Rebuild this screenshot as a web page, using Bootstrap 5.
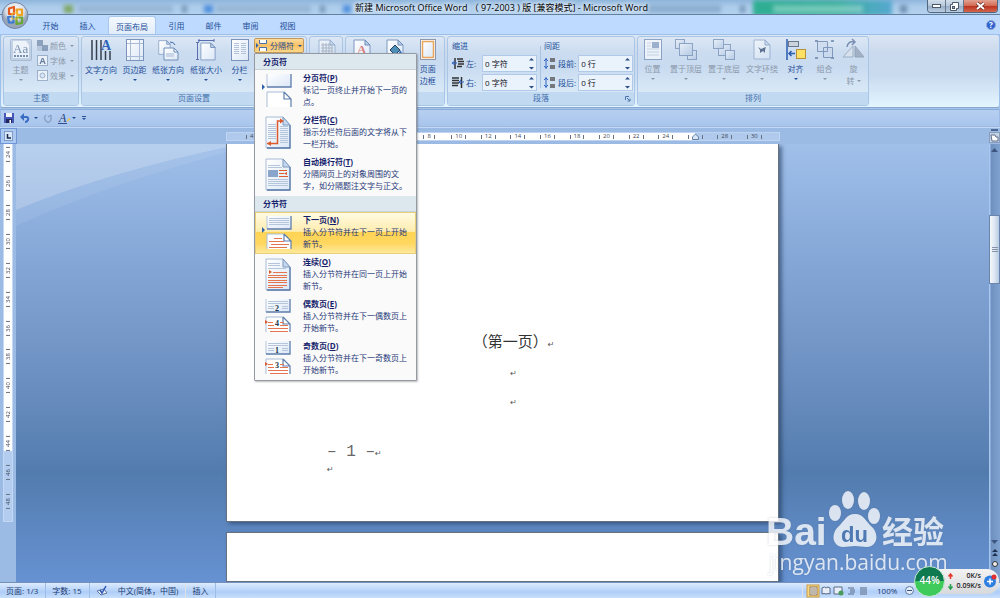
<!DOCTYPE html>
<html lang="zh-CN">
<head>
<meta charset="utf-8">
<meta name="viewport" content="width=device-width, initial-scale=1">
<title>新建 Microsoft Office Word （ 97-2003 ) 版 [兼容模式] - Microsoft Word</title>
<link href="https://cdn.jsdelivr.net/npm/bootstrap@5.3.0/dist/css/bootstrap.min.css" rel="stylesheet">
<style>
  :root { --ink: #224e98; --dim: #8b98aa; --line: #a3bfe2; }
  body { font-family: "Open Sans", "Noto Sans CJK SC", sans-serif; font-size: 8px; line-height: 12px; color: var(--ink); background: #a5c3ec; }
  button, input { font: inherit; color: inherit; }
  button { border: 0; background: none; padding: 0; white-space: nowrap; }
  svg { display: block; flex: none; overflow: visible; }
  a { color: inherit; text-decoration: none; }

  .titlebar { height: 15px; background: linear-gradient(#8fb6dc, #abcbea 45%, #b3d2f0); border-bottom: 1px solid #64809f; overflow: hidden; }
  .titlebar h1 { font-size: 9px; line-height: 15px; font-weight: 400; color: #000; text-shadow: 0 0 4px #fff, 0 0 6px #fff; padding-left: 3px; }
  .glass i { position: absolute; filter: blur(2px); top: 5px; height: 8px; }
  .winctl { top: 0; right: 2px; height: 13px; width: 71px; border: 1px solid #52677f; border-top: 0; border-radius: 0 0 4px 4px; overflow: hidden; }
  .winctl button { flex: 1; background: linear-gradient(#d3dfea, #b4c6d9 50%, #98adc6 51%, #b9cde2); border-right: 1px solid #65788e; }
  .winctl button:last-child { flex: 2; border: 0; background: linear-gradient(#e3a292, #d26a52 48%, #bb3320 52%, #d4674c); }
  .orb { left: 1px; top: 2px; z-index: 5; }

  .tabs { height: 19px; background: #bedaff; padding-left: 32px; }
  .tabs a { width: 37px; text-align: center; line-height: 21px; }
  .tabs a.on { width: 48px; margin: 1px 2px 0; line-height: 19px; background: linear-gradient(#f4f9ff, #e2edfa); border: 1px solid #a9c8ee; border-bottom: 0; border-radius: 3px 3px 0 0; }

  .ribbon { height: 74px; padding: 1px 2px; gap: 2px; background: linear-gradient(#dbe6f4, #cad9ed 18px, #c8daef 40px, #e3f5ff); border: 1px solid #9dc0ea; border-bottom-color: #88a8d0; border-radius: 3px; }
  .rgroup { border: 1px solid #a9c6e6; border-radius: 3px; background: linear-gradient(#dce7f5, #cbdcf0 16px, #c9dbf0 30px, #d9e9f7 56px); height: 70px; }
  .rgroup > footer { height: 13px; line-height: 12px; text-align: center; background: #c1d9f1; color: #4470ad; position: relative; }
  .rbody { flex: 1; padding-top: 1px; min-height: 0; }
  .big { width: 29px; display: flex; flex-direction: column; align-items: center; white-space: nowrap; padding-top: 1px; }
  .big svg { margin-bottom: 3px; }
  .wide { width: 38px; }
  .tri::after { content: ""; border: 2px solid transparent; border-top-color: currentColor; border-bottom: 0; display: block; }
  .big.tri::after { margin-top: 3px; }
  .off { color: var(--dim); }
  .off svg { opacity: .6; }
  .small-btn { display: flex; align-items: center; gap: 2px; height: 15px; }
  .breaks-btn { width: 50px; height: 15px; display: flex; align-items: center; gap: 2px; padding-left: 1px; border: 1px solid #c2975a; border-radius: 2px; background: linear-gradient(#fbdc9d, #f8c064 50%, #fcd98a); position: relative; z-index: 21; }

  .spin { width: 55px; height: 17px; border: 1px solid #b0c9e8; background: #eaf2fb; color: #112; padding-right: 2px; }
  .spin input { border: 0; outline: 0; background: none; padding: 0 2px; min-width: 0; flex: 1; }
  .prow { height: 19px; gap: 2px; }
  .vline { width: 1px; background: #a8c2e2; margin: 8px 3px 4px; }

  .breaks-menu { position: absolute; left: 0; top: 15px; width: 163px; z-index: 20; background: #fafafa; border: 1px solid #959aa2; border-radius: 1px; box-shadow: 1px 1px 2px #0004; color: #1f3878; }
  .breaks-menu h2 { font-size: 8px; line-height: 16px; height: 16px; font-weight: 700; margin: 0; padding-left: 8px; background: #dde7ee; border-bottom: 1px solid #c9d2da; color: #15226b; }
  .breaks-menu button { display: flex; width: 100%; height: 42px; text-align: left; padding: 1px 0 0 7px; gap: 11px; }
  .breaks-menu b { display: block; line-height: 13px; color: #15226b; }
  .breaks-menu .hot { border: 1px solid #e8cf7b; padding: 0 0 0 6px; background: linear-gradient(#fffbe2, #ffedaf 46%, #ffd455 48%, #ffd75f 75%, #ffe99c); }

  .qat { height: 18px; margin-top: 1px; background: linear-gradient(#b6cff1, #a9c5ec); border: 1px solid #9bbbe5; border-top-color: #8aacd9; padding-left: 3px; gap: 6px; }
  .rulerbar { height: 17px; background: #9bbbe4; border-top: 1px solid #c2d8f5; }
  .corner { width: 17px; background: #abc8f0; border: 1px solid #6e96d8; }
  .hruler { width: 100%; max-width: 554px; height: 9px; margin: 4px 0 3px; border: 1px solid #bed4f0; padding: 0 10px; background: linear-gradient(90deg, #b0caee 83px, #fff 83px 468px, #b0caee 468px); color: #3f4855; font-size: 6px; line-height: 7px; }
  .hruler span { flex: 1; text-align: center; position: relative; }
  .tick { display: flex; align-items: center; justify-content: center; gap: 3px; }
  .tick::before, .tick::after { content: ""; width: 1px; height: 4px; background: #68717e; }

  .work { flex: 1; min-height: 0; }
  .vside { width: 16px; background: #9bbbe4; overflow: hidden; }
  .vruler { width: 10px; margin-left: 3px; height: 382px; background: linear-gradient(#fff 311px, #b3cdf1 311px); border: 1px solid #c4d8f3; border-top: 0; color: #3f4855; font-size: 6px; line-height: 8px; }
  .vruler ol { list-style: none; height: 376px; margin: -4px 0 0; padding: 0; }
  .vruler li { flex: 1; writing-mode: vertical-rl; transform: rotate(180deg); }
  .vruler .tick::before, .vruler .tick::after { width: 4px; height: 1px; }
  .canvas { flex: 1; overflow: hidden; background: linear-gradient(#a0c0ea, #86a8d8 25%, #6a8ebf 55%, #537cae 75%, #6692d2); }
  .sheet { width: 100%; max-width: 553px; background: #fff; border: 1px solid #66707f; box-shadow: 3px 2px 4px #233a5a99; position: relative; color: #333; }
  .sheet.first { height: 378px; border-top: 0; margin-bottom: 10px; padding: 184px 100px 0; }
  .doc-line { height: 29px; line-height: 29px; text-align: center; font-family: "Liberation Serif", "Noto Sans CJK SC", serif; font-size: 15px; padding-left: 22px; }
  .pm { font-family: "DejaVu Sans", sans-serif; font-size: 8px; color: #555; }
  .pagenum { font-family: "Liberation Mono", monospace; font-size: 16px; line-height: 24px; color: #666; white-space: pre; margin-top: 25px; }
  .vscroll { width: 11px; background: linear-gradient(90deg, #a9c6ef 1px, #6d90c0 2px, #7fa2d0); }
  .thumb { height: 69px; background: linear-gradient(90deg, #f5f8fc, #dce7f3 50%, #b5cbe2); border: 1px solid #6a84ad; }

  .statusbar { height: 16px; background: linear-gradient(#dceafd, #bfd8fa 40%, #aecdf7 60%, #c9e0fc); border-top: 1px solid #7393be; color: #1a3a72; line-height: 15px; }
  .statusbar > * { border-right: 1px solid #9dbce6; padding: 0 7px 0 6px; white-space: nowrap; }
  .mark-brand { right: 52px; bottom: 21px; z-index: 3; filter: drop-shadow(0 0 1px #5b6d8866); }
  .meter { right: 0; bottom: 1px; z-index: 6; width: 86px; height: 31px; }
  .meter-pill { position: absolute; inset: 3px 1px 3px 12px; padding: 2px 18px 0 0; background: linear-gradient(#f3f3f3, #d8d9dc); border-radius: 12px; color: #222; font-size: 7px; font-weight: 600; line-height: 10px; text-align: right; }
</style>
</head>
<body class="vh-100 d-flex flex-column overflow-hidden position-relative">

<!-- shared icon parts -->
<svg width="0" height="0" class="position-absolute" aria-hidden="true">
  <defs>
    <linearGradient id="pg" x2="1" y2="1"><stop offset="0" stop-color="#fff"/><stop offset="1" stop-color="#dbe7f7"/></linearGradient>
    <linearGradient id="blue" y2="1" x2="1"><stop offset="0" stop-color="#f4f8fd"/><stop offset="1" stop-color="#a9c0de"/></linearGradient>
    <symbol id="sheetTall" viewBox="0 0 26 33"><path d="M1 1h17l7 8v23H1z" fill="url(#pg)" stroke="#a9bcd6"/><path d="M25 9v23H2" fill="none" stroke="#5578a8" stroke-width="1.3"/><path d="M18 1v8h7z" fill="#c5d8ee" stroke="#7d98bf"/></symbol>
    <symbol id="sheetTop" viewBox="0 0 26 14"><path d="M1 0v13h24V0z" fill="url(#pg)"/><path d="M1 0v13" stroke="#b5c5dc"/><path d="M1 13h24V0" fill="none" stroke="#5d7dac" stroke-width="1.3"/></symbol>
    <symbol id="sheetBot" viewBox="0 0 26 16"><path d="M1 16V1h17l7 7v8z" fill="#fff"/><path d="M1 16V1h17" fill="none" stroke="#a9bcd6"/><path d="M18 1l7 7v8M18 1v7h7" fill="none" stroke="#5d7dac" stroke-width="1.2"/></symbol>
    <symbol id="doc" viewBox="0 0 18 21"><path d="M1 1h11l5 5v14H1z" fill="url(#pg)" stroke="#7d98bf"/><path d="M12 1v5h5z" fill="#bcd0ea" stroke="#6f8db8"/></symbol>
  </defs>
</svg>

<header class="titlebar position-relative flex-shrink-0">
  <div class="glass" aria-hidden="true">
    <i style="left:64px;width:9px;background:#7ea765"></i><i style="left:78px;width:95px;background:#7797b966"></i><i style="left:182px;width:5px;background:#7797b9"></i>
    <i style="left:204px;width:9px;background:#4f8fdd"></i><i style="left:216px;width:95px;background:#7797b966"></i><i style="left:320px;width:5px;background:#7797b9"></i>
    <i style="left:343px;width:8px;background:#4f8fdd"></i><i style="left:645px;width:76px;background:#6f93b888"></i><i style="left:740px;width:5px;background:#7797b9"></i>
    <i style="left:753px;width:139px;top:0;height:16px;background:linear-gradient(90deg,#2fae92,#38ad9c 60%,#57a8d0)"></i><i style="left:773px;width:90px;background:#a8e0d488"></i><i style="left:900px;width:7px;background:#6f8fb3"></i>
  </div>
  <h1 class="position-relative text-center mb-0">新建 Microsoft Office Word （ 97-2003 ) 版 [兼容模式] - Microsoft Word</h1>
  <div class="winctl position-absolute d-flex">
    <button aria-label="最小化"><svg class="mx-auto" width="9" height="4"><rect x=".5" y=".5" width="8" height="3" fill="#fff" stroke="#4b596b"/></svg></button>
    <button aria-label="还原"><svg class="mx-auto" width="9" height="9"><path d="M2.500 .5h6v6h-2v2h-6v-6h2z" fill="#fff" stroke="#4b596b"/><rect x="2.500" y="4.500" width="2" height="2" fill="#9fb2c8" stroke="#4b596b"/></svg></button>
    <button aria-label="关闭"><svg class="mx-auto" width="9" height="8"><path d="M1 1l7 6M8 1L1 7" stroke="#6a2a22" stroke-width="3.500"/><path d="M1 1l7 6M8 1L1 7" stroke="#fff" stroke-width="2"/></svg></button>
  </div>
</header>

<button class="orb position-absolute" aria-label="Office 按钮">
  <svg width="28" height="28" viewBox="0 0 28 28"><defs><radialGradient id="orb" cy=".3"><stop offset="0" stop-color="#fff"/><stop offset=".7" stop-color="#d9e0ea"/><stop offset="1" stop-color="#98a5b8"/></radialGradient></defs>
    <circle cx="14" cy="13.500" r="13" fill="url(#orb)" stroke="#7286a2"/>
    <g fill="none" stroke-width="2.200" stroke-linejoin="round"><path d="M13 12H8V6.500l5-1.500z" stroke="#e35b1f"/><path d="M15.500 7.500H21V13h-4.500z" stroke="#f0a01f"/><path d="M12.500 14.500v6H8L7 15z" stroke="#3b79cf"/><path d="M15.500 15.500H21V21l-5.500 1z" stroke="#69a832"/></g><path d="M11 11h6v6h-6z" fill="none" stroke="#f5c53a"/></svg>
</button>

<nav class="tabs d-flex flex-shrink-0" aria-label="功能区">
  <a href="#">开始</a><a href="#">插入</a><a href="#" class="on" aria-current="page">页面布局</a><a href="#">引用</a><a href="#">邮件</a><a href="#">审阅</a><a href="#">视图</a>
  <button class="ms-auto me-1" aria-label="帮助"><svg width="10" height="10"><circle cx="5" cy="5" r="4.500" fill="#2f62d0" stroke="#8fa8d4"/><text x="5" y="8" font-size="8" font-weight="700" fill="#fff" text-anchor="middle">?</text></svg></button>
</nav>

<section class="ribbon d-flex flex-shrink-0">
  <!-- themes -->
  <div class="rgroup d-flex flex-column flex-shrink-0" style="width:76px">
    <div class="rbody d-flex off">
      <button class="big tri" style="width:33px"><svg width="22" height="22"><rect x=".5" y=".5" width="21" height="21" rx="1" fill="#b9c9de" stroke="#8fa5c2"/><path d="M3 2h13l3 4v13H3z" fill="#fff"/><text x="3" y="14" font-family="Liberation Serif" font-size="13" fill="#3d5a86">Aa</text><path d="M4 17h15" stroke="#3d5a86" stroke-dasharray="2 1" stroke-width="2"/></svg>主题</button>
      <div>
        <button class="small-btn tri"><svg width="11" height="11"><path d="M0 0h11v11H0z" fill="#5d7699"/><path d="M6 0h5v5H6z" fill="#dbe4ef"/><path d="M0 6h5v5H0z" fill="#a9bad0"/></svg>颜色&nbsp;</button>
        <button class="small-btn tri"><svg width="11" height="11"><rect x=".5" y=".5" width="10" height="10" fill="#fff" stroke="#7d92b0"/><text x="5.500" y="9" font-size="9" font-weight="700" text-anchor="middle" fill="#2d466e">A</text></svg>字体&nbsp;</button>
        <button class="small-btn tri"><svg width="11" height="11"><rect x=".5" y=".5" width="10" height="10" fill="#fff" stroke="#7d92b0"/><circle cx="5.500" cy="5.500" r="2.500" fill="#dfe8f4" stroke="#7d92b0"/></svg>效果&nbsp;</button>
      </div>
    </div>
    <footer>主题</footer>
  </div>

  <!-- page setup -->
  <div class="rgroup d-flex flex-column flex-shrink-0" style="width:226px">
    <div class="rbody d-flex">
      <button class="big wide tri"><svg width="22" height="22"><path d="M2 1v20M6.500 1v20M11 1v20M15.500 12v9M20 12v9" stroke="#37404d" stroke-width="1.500"/><text x="11" y="11" font-family="Liberation Serif" font-weight="700" font-size="14" fill="#2e65b8">A</text></svg>文字方向</button>
      <button class="big tri"><svg width="18" height="22"><rect x=".5" y=".5" width="17" height="21" fill="url(#pg)" stroke="#7a94bb"/><path d="M4.500 1v20M13.500 1v20M1 4.500h16M1 17.500h16" stroke="#a9bbd5"/></svg>页边距</button>
      <button class="big wide tri"><svg width="22" height="22"><use href="#doc" x="1" y="0" width="13" height="17"/><path d="M7 9h10l4 4v8H7z" fill="url(#pg)" stroke="#6f8db8"/><path d="M17 9v4h4" fill="none" stroke="#6f8db8"/><path d="M9 14h8v4H9z" fill="#c8d5e6"/><path d="M13 3q4 0 5 3" stroke="#3f68a8" fill="none"/></svg>纸张方向</button>
      <button class="big wide tri"><svg width="20" height="22"><path d="M2 1.500h16M1.500 3v17M3 0v3M18 0v3M0 3.500h3M0 20.500h3" stroke="#5b6fb0"/><use href="#doc" x="4" y="3" width="16" height="19"/></svg>纸张大小</button>
      <button class="big tri"><svg width="18" height="22"><rect x=".5" y=".5" width="17" height="21" fill="url(#pg)" stroke="#7a94bb"/><path d="M3 4.500h5M3 6.500h5M3 8.500h5M3 10.500h5M3 12.500h5M3 14.500h5M10 4.500h5M10 6.500h5M10 8.500h5M10 10.500h5M10 12.500h5M10 14.500h5" stroke="#b4c2d7"/></svg>分栏</button>
      <div class="position-relative">
        <button class="breaks-btn tri" aria-haspopup="true" aria-expanded="true"><svg width="12" height="11"><path d="M0 3l2.500 2.500L0 8z" fill="#2d62ad"/><path d="M3.500 0v3.500h7V0M3.500 11V7.500h7V11" fill="#fff" stroke="#4a6ea5"/></svg>分隔符&nbsp;</button>
        <div class="breaks-menu" role="menu">
          <h2>分页符</h2>
          <button role="menuitem"><svg width="30" height="38"><path d="M0 13l3 3-3 3z" fill="#2d62ad"/><use href="#sheetTop" x="4" y="3" width="26" height="14"/><use href="#sheetBot" x="4" y="20" width="26" height="16"/></svg><span><b>分页符(<u>P</u>)</b>标记一页终止并开始下一页的<br>点。</span></button>
          <button role="menuitem"><svg width="30" height="38"><use href="#sheetTall" x="3" y="3" width="26" height="33"/><path d="M6 11.500h8M6 13.500h8M6 15.500h8M6 17.500h8M6 19.500h8M6 21.500h8M6 23.500h8M6 25.500h8M18 13.500h8M18 15.500h8M18 17.500h8M18 19.500h8M18 21.500h8M18 23.500h8M18 25.500h8M18 27.500h8M18 29.500h8" stroke="#b4c5dc"/><path d="M5 30.500h10.500V8H19" fill="none" stroke="#dc5a2c" stroke-width="1.500"/><path d="M18 5.500l4 2.500-4 2.500zM9 28l-4 2.500L9 33z" fill="#dc5a2c"/></svg><span><b>分栏符(<u>C</u>)</b>指示分栏符后面的文字将从下<br>一栏开始。</span></button>
          <button role="menuitem"><svg width="30" height="38"><use href="#sheetTall" x="3" y="3" width="26" height="33"/><path d="M6 10.500h12M6 12.500h14M6 24.500h20M6 26.500h20M6 28.500h20M6 30.500h20" stroke="#b4c5dc"/><path d="M6 15h10v7H6z" fill="#8aa5cc"/><path d="M17 15.500h8M17 18.500h5M17 21.500h9" stroke="#dc5a2c"/><path d="M25 17l-3 1.500 3 1.500z" fill="#dc5a2c"/></svg><span><b>自动换行符(<u>T</u>)</b>分隔网页上的对象周围的文<br>字，如分隔题注文字与正文。</span></button>
          <h2>分节符</h2>
          <button role="menuitem" class="hot"><svg width="30" height="38"><path d="M0 14l3 3-3 3z" fill="#2d62ad"/><use href="#sheetTop" x="4" y="3" width="26" height="14"/><path d="M7 5.500h20M7 7.500h20M7 9.500h20M7 11.500h20" stroke="#b4c5dc"/><use href="#sheetBot" x="4" y="20" width="26" height="16"/><path d="M12 25.500h8M7 28.500h15M9 31.500h18M7 34.500h18" stroke="#e3764e"/></svg><span><b>下一页(<u>N</u>)</b>插入分节符并在下一页上开始<br>新节。</span></button>
          <button role="menuitem"><svg width="30" height="38"><use href="#sheetTall" x="3" y="3" width="26" height="33"/><path d="M6 8.500h12M6 10.500h12M6 13.500h18" stroke="#b4c5dc"/><path d="M11 17.500h14M6 20.500h19M6 22.500h19M6 25.500h19M6 27.500h19M6 30.500h19M6 32.500h15" stroke="#e3764e"/><path d="M7 15l3 2-3 2z" fill="#dc5a2c"/></svg><span><b>连续(<u>O</u>)</b>插入分节符并在同一页上开始<br>新节。</span></button>
          <button role="menuitem"><svg width="30" height="38"><use href="#sheetTop" x="3" y="2" width="26" height="14"/><path d="M6 4.500h20M6 6.500h20M6 9.500h6M20 9.500h6M6 11.500h6M20 11.500h6" stroke="#b4c5dc"/><text x="13" y="14" font-family="Liberation Serif" font-weight="700" font-size="8" fill="#234">2</text><use href="#sheetBot" x="3" y="19" width="26" height="16"/><path d="M6 25.500h5M18 25.500h4M6 28.500h6M18 28.500h8M6 31.500h20M8 34.500h18" stroke="#e3764e"/><path d="M3 23l3 2-3 2z" fill="#dc5a2c"/><text x="13" y="29" font-family="Liberation Serif" font-weight="700" font-size="8" fill="#234">4</text></svg><span><b>偶数页(<u>E</u>)</b>插入分节符并在下一偶数页上<br>开始新节。</span></button>
          <button role="menuitem"><svg width="30" height="38"><use href="#sheetTop" x="3" y="2" width="26" height="14"/><path d="M6 4.500h20M6 6.500h20M6 9.500h6M20 9.500h6M6 11.500h6M20 11.500h6" stroke="#b4c5dc"/><text x="13" y="14" font-family="Liberation Serif" font-weight="700" font-size="8" fill="#234">1</text><use href="#sheetBot" x="3" y="19" width="26" height="16"/><path d="M6 25.500h5M18 25.500h4M6 28.500h6M18 28.500h8M6 31.500h20M8 34.500h18" stroke="#e3764e"/><path d="M3 23l3 2-3 2z" fill="#dc5a2c"/><text x="13" y="29" font-family="Liberation Serif" font-weight="700" font-size="8" fill="#234">3</text></svg><span><b>奇数页(<u>D</u>)</b>插入分节符并在下一奇数页上<br>开始新节。</span></button>
        </div>
      </div>
    </div>
    <footer>页面设置</footer>
  </div>

  <!-- manuscript paper -->
  <div class="rgroup d-flex flex-column flex-shrink-0" style="width:34px">
    <div class="rbody d-flex off"><button class="big" aria-label="稿纸设置"><svg class="ms-1" width="18" height="21"><use href="#doc" width="18" height="21"/><path d="M3 6h12M3 9h12M3 12h12M5 4v12M8 4v12M11 4v12M14 7v9" stroke="#8d99aa"/></svg></button></div>
    <footer></footer>
  </div>

  <!-- page background -->
  <div class="rgroup d-flex flex-column flex-shrink-0" style="width:100px">
    <div class="rbody d-flex justify-content-around">
      <button class="big" aria-label="水印"><svg width="18" height="21"><use href="#doc" width="18" height="21"/><text x="4" y="15" font-family="Liberation Serif" font-weight="700" font-size="13" fill="#d98080">A</text></svg></button>
      <button class="big" aria-label="页面颜色"><svg width="18" height="21"><use href="#doc" width="18" height="21"/><path d="M4 11l5-5 5 5-5 5z" fill="#4e8fb8" stroke="#26405f"/><path d="M14 11q3 3 1 5t-2-2z" fill="#2f6cc0"/></svg></button>
      <button class="big"><svg width="16" height="21"><rect x=".5" y=".5" width="15" height="20" fill="#fff" stroke="#8b97aa"/><rect x="2.500" y="2.500" width="11" height="16" fill="url(#pg)" stroke="#eba55b" stroke-width="1.500"/></svg>页面<br>边框</button>
    </div>
    <footer></footer>
  </div>

  <!-- paragraph -->
  <div class="rgroup d-flex flex-column flex-shrink-0" style="width:188px">
    <div class="rbody d-flex ps-1">
      <div>
        <div class="lh-1 pt-1 pb-1">缩进</div>
        <div class="prow d-flex align-items-center"><svg width="12" height="11"><path d="M5 1h6M6 3.500h6M6 6h6M5 8.500h5M3 0v11" stroke="#333" stroke-width="1.500"/><path d="M5 5L1 5M3 3L0 5l3 2" stroke="#2d62c0" fill="none"/></svg><label for="il">左:</label><div class="spin d-flex align-items-center ms-1"><input type="text" id="il" value="0 字符"><svg width="5" height="11"><path d="M0 2.500L2.500 0 5 2.500zM0 9l2.500 2.500L5 9z" fill="#2b4c86"/></svg></div></div>
        <div class="prow d-flex align-items-center"><svg width="12" height="11"><path d="M0 1h7M0 3.500h7M0 6h7M0 8.500h6M9.500 0v11" stroke="#333" stroke-width="1.500"/><path d="M7 5h5M9 3l-2 2 2 2" stroke="#2d62c0" fill="none"/></svg><label for="ir">右:</label><div class="spin d-flex align-items-center ms-1"><input type="text" id="ir" value="0 字符"><svg width="5" height="11"><path d="M0 2.500L2.500 0 5 2.500zM0 9l2.500 2.500L5 9z" fill="#2b4c86"/></svg></div></div>
      </div>
      <div class="vline"></div>
      <div>
        <div class="lh-1 pt-1 pb-1">间距</div>
        <div class="prow d-flex align-items-center"><svg width="12" height="11"><path d="M6 1h5M6 3h5M6 8h5M6 10h5" stroke="#555" stroke-width="1.500"/><path d="M2 0v11M0 3l2-2 2 2M0 8l2 2 2-2" stroke="#2d62c0" fill="none"/></svg><label for="sb">段前:</label><div class="spin d-flex align-items-center"><input type="text" id="sb" value="0 行"><svg width="5" height="11"><path d="M0 2.500L2.500 0 5 2.500zM0 9l2.500 2.500L5 9z" fill="#2b4c86"/></svg></div></div>
        <div class="prow d-flex align-items-center"><svg width="12" height="11"><path d="M6 1h5M6 3h5M6 8h5M6 10h5" stroke="#555" stroke-width="1.500"/><path d="M2 0v11M0 3l2-2 2 2M0 8l2 2 2-2" stroke="#2d62c0" fill="none"/></svg><label for="sa">段后:</label><div class="spin d-flex align-items-center"><input type="text" id="sa" value="0 行"><svg width="5" height="11"><path d="M0 2.500L2.500 0 5 2.500zM0 9l2.500 2.500L5 9z" fill="#2b4c86"/></svg></div></div>
      </div>
    </div>
    <footer>段落<svg class="position-absolute end-0 top-0 mt-1 me-1" width="5" height="5"><path d="M.5 4V.5H4M2 2l3 3M5 2.500V5H2.500" fill="none" stroke="#4d74ad"/></svg></footer>
  </div>

  <!-- arrange -->
  <div class="rgroup d-flex flex-column flex-shrink-0" style="width:232px">
    <div class="rbody d-flex">
      <button class="big tri off"><svg width="18" height="21"><rect x=".5" y=".5" width="17" height="20" fill="#fff" stroke="#5f7ba6"/><path d="M3 4h4M3 7h4M3 10h12M3 13h12M3 16h12" stroke="#c1ccdb"/><path d="M8 3h7v6H8z" fill="#7790b5"/></svg>位置</button>
      <button class="big wide tri off"><svg width="22" height="21"><rect x=".5" y=".5" width="9" height="9" fill="url(#blue)" stroke="#5f7ba6"/><rect x="12.500" y="11.500" width="9" height="9" fill="url(#blue)" stroke="#5f7ba6"/><rect x="4.500" y="4.500" width="13" height="12" fill="url(#blue)" stroke="#5f7ba6"/></svg>置于顶层</button>
      <button class="big wide tri off"><svg width="22" height="21"><rect x="5.500" y="5.500" width="12" height="11" fill="url(#blue)" stroke="#5f7ba6"/><rect x=".5" y=".5" width="10" height="9" fill="url(#blue)" stroke="#5f7ba6"/><rect x="12.500" y="11.500" width="9" height="9" fill="url(#blue)" stroke="#5f7ba6"/></svg>置于底层</button>
      <button class="big wide tri off"><svg width="18" height="21"><use href="#doc" width="18" height="21"/><path d="M5 8l3 2 5-2-1 3v3l-2-2-3 2v-3z" fill="#152c52"/></svg>文字环绕</button>
      <button class="big tri"><svg width="20" height="21"><path d="M1 0v21" stroke="#2b5db0" stroke-width="1.500"/><rect x="2.500" y="2.500" width="10" height="5" fill="#ccd3dc" stroke="#69788d"/><rect x="10.500" y="10.500" width="9" height="9" fill="#ffe066" stroke="#b8923a"/><path d="M9 14.500H3M5.500 12L3 14.500 5.500 17" fill="none" stroke="#2b5db0" stroke-width="1.500"/></svg>对齐</button>
      <button class="big tri off"><svg width="19" height="21"><path d="M2.500 2.500h10v10h-10zM8.500 8.500h9v10h-9z" fill="#c7d6ea88" stroke="#4c6a98"/><path d="M0 1h3v2H0zM16 1h3v2h-3zM0 18h3v2H0zM16 18h3v2h-3z" fill="#4c6a98"/></svg>组合</button>
      <button class="big off"><svg width="21" height="21"><path d="M10 7v11H0z" fill="#dfe5ec" stroke="#7f8fa6"/><path d="M12 7v11h9z" fill="#8795a9" stroke="#6f7f96"/><path d="M4 8q1-6 7-5M9 0l3 3-3 3" fill="none" stroke="#3d5a86" stroke-width="1.500"/></svg>旋<span class="d-flex align-items-center tri">转&nbsp;</span></button>
    </div>
    <footer>排列</footer>
  </div>
</section>

<div class="qat d-flex align-items-center flex-shrink-0">
  <button aria-label="保存"><svg width="10" height="10"><path d="M0 0h10v10H0z" fill="#4656b5"/><path d="M2 0h6v4H2z" fill="#f0f3fa"/><path d="M2 6h6v4H2z" fill="#20285f"/><path d="M5.500 7h1.500v3H5.500z" fill="#fff"/></svg></button>
  <button class="tri d-flex align-items-center gap-1" aria-label="撤消"><svg width="10" height="10"><path d="M3 4h3q3 0 2 3-1 2-3 2" fill="none" stroke="#3a6cc4" stroke-width="2"/><path d="M0 4l4-4v8z" fill="#3a6cc4"/></svg></button>
  <button aria-label="恢复"><svg width="8" height="9"><path d="M2 1Q-1 4 2 7t5-1V1M7 1L4 3" fill="none" stroke="#8ba3c6" stroke-width="1.500"/></svg></button>
  <button class="tri d-flex align-items-center" aria-label="字体颜色"><svg width="14" height="11"><text x="1" y="9" font-family="Liberation Serif" font-style="italic" font-size="12" fill="#1d3f80">A</text><path d="M0 10.500h9" stroke="#2b4f92"/><path d="M8 9l3-4 1.500 1.500z" fill="#f1c13f"/></svg></button>
  <button class="tri" aria-label="自定义快速访问工具栏"><svg width="4" height="2"><path d="M0 .5h4" stroke="#2b4f92"/></svg></button>
</div>

<div class="rulerbar d-flex flex-shrink-0">
  <button class="corner d-flex align-items-center justify-content-center" aria-label="制表符"><svg width="9" height="10"><rect x=".5" y=".5" width="8" height="9" fill="#d8e6f8" stroke="#7d9cc8"/><path d="M3.500 3v4H7" fill="none" stroke="#15294c" stroke-width="1.500"/></svg></button>
  <div class="flex-grow-1 d-flex justify-content-center">
    <div class="hruler d-flex">
      <span class="tick">4</span><span></span><span></span><span></span><span></span><span></span><span class="tick">8</span><span class="tick">10</span><span class="tick">12</span><span class="tick">14</span><span class="tick">16</span><span class="tick">18</span><span class="tick">20</span><span class="tick">22</span><span class="tick">24</span><span class="tick"><svg width="7" height="7"><path d="M.5 6.500V4l3-3 3 3v2.500z" fill="#dbe6f4" stroke="#6580a8"/></svg></span><span class="tick">28</span><span class="tick">30</span>
    </div>
  </div>
  <button class="d-flex flex-column align-items-center" style="width:11px" aria-label="标尺"><svg width="11" height="15"><path d="M2 2h7" stroke="#4b6691" stroke-width="2"/><rect x=".5" y="4.500" width="10" height="10" fill="#c3d2e5" stroke="#8a9dbb"/><path d="M2 7h4l1 2h2v4H3z" fill="#fff" stroke="#5d6f8c"/></svg></button>
</div>

<main class="work d-flex">
  <div class="vside flex-shrink-0">
    <div class="vruler">
      <ol class="d-flex flex-column">
        <li class="tick">24</li><li class="tick">26</li><li class="tick">28</li><li class="tick">30</li><li class="tick">32</li><li class="tick">34</li><li class="tick">36</li><li class="tick">38</li><li class="tick">40</li><li class="tick">42</li><li class="tick">44</li><li class="tick">46</li><li class="tick">48</li>
      </ol>
    </div>
  </div>
  <div class="canvas position-relative d-flex flex-column align-items-center">
    <svg class="position-absolute top-0 start-0" width="260" height="90" aria-hidden="true"><path d="M0 0h240Q90 40 0 82z" fill="#fff" opacity=".07"/><path d="M0 0h225Q90 28 0 66z" fill="#fff" opacity=".2"/></svg>
    <article class="sheet first flex-shrink-0">
      <div class="doc-line">（第一页）<span class="pm">↵</span></div>
      <div class="doc-line"><span class="pm">↵</span></div>
      <div class="doc-line"><span class="pm">↵</span></div>
      <div class="pagenum">– 1 –<span class="pm">↵</span></div>
      <div class="pm lh-1">↵</div>
    </article>
    <article class="sheet flex-grow-1"></article>
  </div>
  <div class="vscroll d-flex flex-column align-items-center flex-shrink-0">
    <svg width="7" height="4" class="mt-1"><path d="M0 4l3.500-4L7 4z" fill="#3c567f"/></svg>
    <div class="flex-fill"></div>
    <div class="thumb w-100 d-flex align-items-center justify-content-center"><svg width="6" height="6"><path d="M0 .5h6M0 2.500h6M0 4.500h6" stroke="#8593a8"/></svg></div>
    <div style="flex:4 0 0"></div>
    <svg width="8" height="44"><path d="M0 2h7L3.500 6z" fill="#3c567f"/><path d="M1 14l3-3 3 3zM1 18l3-3 3 3z" fill="#1d2f4d"/><circle cx="4" cy="26" r="2.500" fill="#eee" stroke="#333"/></svg>
  </div>
</main>

<footer class="statusbar d-flex flex-shrink-0">
  <span>页面: 1/3</span><span>字数: 15</span>
  <span class="d-flex align-items-center gap-2 border-end"><svg width="12" height="10"><path d="M1 5l4 4 6-2-3-4z" fill="#e7edf6" stroke="#60769a"/><path d="M4 4l2 3 4-7" fill="none" stroke="#2c57b8" stroke-width="1.500"/></svg>&nbsp;中文(简体，中国)</span>
  <span>插入</span>
  <span class="border-0 flex-grow-1"></span>
  <div class="d-flex align-items-center gap-1 border-0 border-start pe-0 ps-1">
    <svg width="58" height="12"><rect x="0" y="0" width="12" height="12" fill="#ffd87c" stroke="#c79b48"/><rect x="3" y="2" width="7" height="8" fill="#fff" stroke="#80715a"/><path d="M4 4h5M4 6h5M4 8h5" stroke="#80715a"/><path d="M15 3q3-2 4 0 2-2 4 0v6q-2-1-4 0-2-1-4 0z" fill="#e7eef7" stroke="#596b87"/><path d="M27 2h8v7h-8z" fill="#e7eef7" stroke="#596b87"/><circle cx="34" cy="8" r="2.500" fill="#4a9a5c"/><path d="M41 3h6M43 5h5M43 7h5M41 9h6M53 3h7M53 5h7M53 7h7M53 9h7" stroke="#596b87"/></svg>
  </div>
  <div class="border-0 ps-2 d-flex align-items-center" style="width:135px"><span class="ms-1 me-2">100%</span><svg width="9" height="9"><circle cx="4.500" cy="4.500" r="4" fill="#e4edf8" stroke="#5d7aa5"/><path d="M2 4.500h5" stroke="#334f7c"/></svg></div>
</footer>

<!-- brand overlay -->
<svg class="mark-brand position-absolute" width="180" height="86" fill="#fff" opacity=".78" aria-hidden="true">
  <text x="-2" y="54" font-family="Liberation Sans" font-weight="700" font-size="39">Bai</text>
  <ellipse cx="67" cy="22" rx="6" ry="8"/><ellipse cx="80" cy="9" rx="6" ry="9"/><ellipse cx="96" cy="10" rx="6" ry="9"/><ellipse cx="106" cy="25" rx="6" ry="8"/>
  <path d="M87 23c9 0 11 8 17 13 7 7 6 19-5 20-5 0-7-1-12-1s-7 1-12 1c-11-1-12-13-5-20 6-5 8-13 17-13z"/>
  <text x="73" y="51" font-family="Liberation Sans" font-weight="700" font-size="22" fill="#4c75ae">du</text>
  <text x="114" y="52" font-family="Noto Sans CJK SC" font-weight="700" font-size="31">经验</text>
  <text x="1" y="79" font-family="Open Sans" font-size="21">jingyan.baidu.com</text>
</svg>

<!-- network meter -->
<aside class="meter position-absolute">
  <div class="meter-pill">0K/s<br>0.09K/s</div>
  <svg class="position-relative" width="86" height="31"><defs><linearGradient id="gr" y2="1" x2="0"><stop offset=".5" stop-color="#0f7a50"/><stop offset=".5" stop-color="#3fca5c"/></linearGradient></defs>
    <circle cx="15.500" cy="15.500" r="15" fill="url(#gr)" stroke="#c6e9d2"/><text x="15.500" y="18" text-anchor="middle" font-size="10" font-weight="600" fill="#fff">44%</text>
    <path d="M36.500 13V9M34.500 10.500l2-2.500 2 2.500" stroke="#e23b2e" fill="none" stroke-width="1.500"/><path d="M36.500 18v5M34.500 20.500l2 2.500 2-2.500" stroke="#2aa052" fill="none" stroke-width="1.500"/>
    <circle cx="76" cy="15.500" r="6" fill="#2f7fe0"/><path d="M73 15.500h6M76 12.500v6" stroke="#fff" stroke-width="1.500"/><circle cx="80" cy="11" r="2.500" fill="#e22f2f"/></svg>
</aside>

<script src="https://cdn.jsdelivr.net/npm/bootstrap@5.3.0/dist/js/bootstrap.bundle.min.js"></script>
</body>
</html>
